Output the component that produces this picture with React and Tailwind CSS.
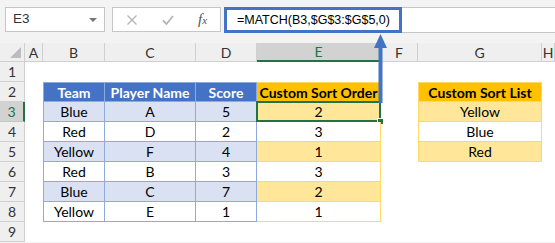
import React from 'react';

const cols = ['A', 'B', 'C', 'D', 'E', 'F', 'G', 'H'];

const team = [
    ['Blue', 'A', '5', '2'],
    ['Red', 'D', '2', '3'],
    ['Yellow', 'F', '4', '1'],
    ['Red', 'B', '3', '3'],
    ['Blue', 'C', '7', '2'],
    ['Yellow', 'E', '1', '1'],
];

const sortList = ['Yellow', 'Blue', 'Red'];

const Blank = () => <div className="bg-white" />;

const RowHead = ({ n, active }) => (
    <div
        className={
            active
                ? 'flex items-center justify-center bg-[#d2d2d2] text-[#217346] border-b border-[#c6c6c6] border-r-2 border-r-[#217346] text-[14px]'
                : 'flex items-center justify-center bg-[#efefef] text-[#333] border-b border-r border-[#d0d0d0] text-[14px]'
        }
    >
        {n}
    </div>
);

const ColHead = ({ c, active }) => (
    <div
        className={
            active
                ? 'flex items-center justify-center bg-[#d2d2d2] text-[#217346] border-r border-[#c6c6c6] border-b-2 border-b-[#217346] text-[14px]'
                : 'flex items-center justify-center bg-[#efefef] text-[#333] border-r border-b border-[#d0d0d0] text-[14px]'
        }
    >
        {c}
    </div>
);

const App = () => {
    return (
        <div className="relative w-[555px] h-[243px] bg-[#f3f3f3] overflow-hidden font-['Lato','Liberation_Sans',sans-serif] text-black">
            {/* formula bar */}
            <div className="flex h-[43px] pt-[7px] pl-[5px]">
                <div className="flex items-center justify-between w-[100px] h-[25px] bg-white border border-[#c6c6c6] pl-[7px] pr-[7px] font-['Liberation_Sans',sans-serif] text-[13.5px] text-[#333]">
                    <span>E3</span>
                    <span className="w-0 h-0 border-l-[4px] border-r-[4px] border-t-[4px] border-l-transparent border-r-transparent border-t-[#777]" />
                </div>
                <div className="flex items-center w-[109px] h-[25px] ml-[7px] bg-white border border-[#c6c6c6] pl-[14px]">
                    <svg width="10" height="10" viewBox="0 0 10 10">
                        <path d="M0.5 0.5L9.5 9.5M9.5 0.5L0.5 9.5" stroke="#b5b5b5" strokeWidth="1.4" />
                    </svg>
                    <svg className="ml-[25px]" width="12" height="10" viewBox="0 0 12 10">
                        <path d="M1 5.5L4.5 9L11 1" stroke="#b5b5b5" strokeWidth="1.8" fill="none" />
                    </svg>
                    <span className="ml-[24px] font-['Liberation_Serif',serif] italic text-[15px] text-[#555] leading-none">
                        f<span className="text-[11px]">x</span>
                    </span>
                </div>
                <div className="flex flex-1 h-[26px] ml-[3px] bg-white border-y border-[#c6c6c6]">
                    <div className="flex items-center w-[178px] h-[26px] -mt-px border-[3px] border-[#4472c4] pl-[10px] font-['Liberation_Sans',sans-serif] text-[12.5px]">
                        =MATCH(B3,$G$3:$G$5,0)
                    </div>
                </div>
            </div>

            {/* sheet */}
            <div className="grid grid-cols-[25px_18px_62px_91px_61px_124px_37px_124px_13px] grid-rows-[19px_repeat(9,20px)]">
                <div className="relative bg-[#efefef] border-r border-b border-[#d0d0d0]">
                    <svg className="absolute right-[3px] bottom-[3px]" width="11" height="11" viewBox="0 0 11 11">
                        <path d="M11 0V11H0Z" fill="#bcbcbc" />
                    </svg>
                </div>
                {cols.map((c) => (
                    <ColHead key={c} c={c} active={c === 'E'} />
                ))}

                {/* row 1 */}
                <RowHead n={1} />
                {cols.map((c) => (
                    <Blank key={c} />
                ))}

                {/* row 2 headers */}
                <RowHead n={2} />
                <Blank />
                <div className="flex items-center justify-center bg-[#4472c4] text-white font-bold text-[14px] border-l border-t border-r border-b border-[#8ea9db]">Team</div>
                <div className="flex items-center justify-center bg-[#4472c4] text-white font-bold text-[14px] border-t border-r border-b border-[#8ea9db]">Player Name</div>
                <div className="flex items-center justify-center bg-[#4472c4] text-white font-bold text-[14px] border-t border-r border-b border-[#8ea9db]">Score</div>
                <div className="flex items-center justify-center bg-[#ffc000] font-bold text-[14px] border-t border-r border-b border-[#ffd966]">Custom Sort Order</div>
                <Blank />
                <div className="flex items-center justify-center bg-[#ffc000] font-bold text-[14px] border border-[#ffd966]">Custom Sort List</div>
                <Blank />

                {team.map((r, i) => {
                    const band = i % 2 === 0;
                    const blue = band ? 'bg-[#d9e1f2]' : 'bg-white';
                    const yel = band ? 'bg-[#ffe699]' : 'bg-white';
                    return (
                        <React.Fragment key={i}>
                            <RowHead n={i + 3} active={i === 0} />
                            <Blank />
                            <div className={`flex items-center justify-center ${blue} text-[14px] border-l border-r border-b border-[#8ea9db]`}>{r[0]}</div>
                            <div className={`flex items-center justify-center ${blue} text-[14px] border-r border-b border-[#8ea9db]`}>{r[1]}</div>
                            <div className={`flex items-center justify-center ${blue} text-[14px] border-r border-b border-[#8ea9db]`}>{r[2]}</div>
                            <div className={`relative flex items-center justify-center ${yel} text-[14px] border-r border-b border-[#ffd966]`}>
                                {r[3]}
                                {i === 0 && (
                                    <>
                                        <div className="absolute -left-px -top-px -right-px -bottom-px border-2 border-[#217346]" />
                                        <div className="absolute -right-[3px] -bottom-[3px] w-[5px] h-[5px] bg-[#217346] outline outline-1 outline-white" />
                                    </>
                                )}
                            </div>
                            <Blank />
                            {i < 3 ? (
                                <div className={`flex items-center justify-center ${i % 2 === 0 ? 'bg-[#ffe699]' : 'bg-white'} text-[14px] border-l border-r border-b border-[#ffd966]`}>
                                    {sortList[i]}
                                </div>
                            ) : (
                                <Blank />
                            )}
                            <Blank />
                        </React.Fragment>
                    );
                })}

                {/* row 9 */}
                <RowHead n={9} />
                {cols.map((c) => (
                    <Blank key={c} />
                ))}
            </div>

            {/* arrow from formula to cell */}
            <svg className="absolute left-[373px] top-[33px]" width="15" height="70" viewBox="0 0 15 70">
                <path d="M7.5 1L14 15H1Z" fill="#4472c4" />
                <rect x="5.5" y="13" width="4" height="57" fill="#4472c4" />
            </svg>
        </div>
    );
};

export default App;
